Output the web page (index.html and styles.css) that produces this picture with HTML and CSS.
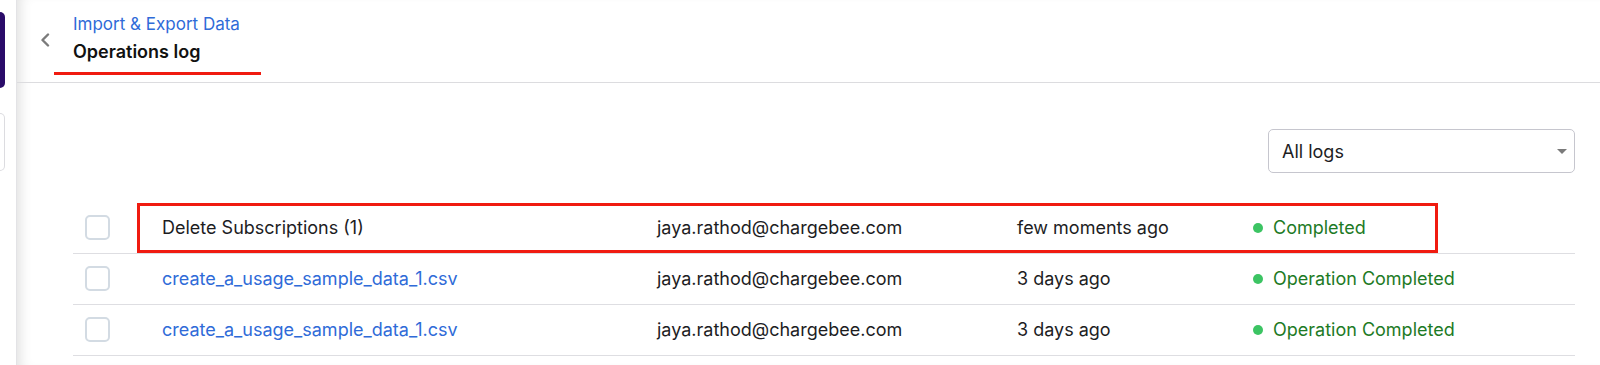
FILE: index.html
```html
<!DOCTYPE html>
<html lang="en">
<head>
    <meta charset="UTF-8">
    <meta name="viewport" content="width=device-width, initial-scale=1.0">
    <title>Operations log</title>
    <link rel="stylesheet" href="styles.css">
</head>
<body>
    <div class="app">
        <aside class="sidebar">
            <div class="brand"></div>
            <div class="side-box"></div>
        </aside>

        <main class="main">
            <header class="page-header">
                <svg class="back" width="10" height="14" viewBox="0 0 10 14">
                    <polyline points="8,1.5 2.5,7 8,12.5" fill="none" stroke="#7b7b7b" stroke-width="2.4" stroke-linecap="round" stroke-linejoin="round"/>
                </svg>
                <div class="title-block">
                    <a class="crumb" href="#">Import &amp; Export Data</a>
                    <h1 class="title">Operations log</h1>
                </div>
            </header>

            <div class="content">
                <div class="toolbar">
                    <div class="select">
                        <span>All logs</span>
                        <span class="caret"></span>
                    </div>
                </div>

                <div class="log-table">
                    <div class="row">
                        <div class="cell"><span class="checkbox"></span></div>
                        <div class="cell">Delete Subscriptions (1)</div>
                        <div class="cell">jaya.rathod@chargebee.com</div>
                        <div class="cell">few moments ago</div>
                        <div class="cell status"><span class="dot"></span>Completed</div>
                        <div class="highlight"></div>
                    </div>
                    <div class="row">
                        <div class="cell"><span class="checkbox"></span></div>
                        <div class="cell"><a class="file" href="#">create_a_usage_sample_data_1.csv</a></div>
                        <div class="cell">jaya.rathod@chargebee.com</div>
                        <div class="cell">3 days ago</div>
                        <div class="cell status"><span class="dot"></span>Operation Completed</div>
                    </div>
                    <div class="row">
                        <div class="cell"><span class="checkbox"></span></div>
                        <div class="cell"><a class="file" href="#">create_a_usage_sample_data_1.csv</a></div>
                        <div class="cell">jaya.rathod@chargebee.com</div>
                        <div class="cell">3 days ago</div>
                        <div class="cell status"><span class="dot"></span>Operation Completed</div>
                    </div>
                </div>
            </div>
        </main>
    </div>
</body>
</html>
```

FILE: styles.css
```css
body {
    margin: 0;
    font-family: 'Inter', 'Liberation Sans', sans-serif;
    color: #1d1d1f;
    background: #fff;
}

.app {
    display: flex;
    min-height: 365px;
}

.sidebar {
    width: 16px;
    border-right: 1px solid #e3e3e6;
    flex-shrink: 0;
}

.brand {
    width: 5px;
    height: 76px;
    margin-top: 12px;
    background: #2a0b69;
    border-radius: 0 7px 7px 0;
}

.side-box {
    width: 4px;
    height: 56px;
    margin-top: 25px;
    border: 1px solid #dcdce0;
    border-left: none;
    border-radius: 0 5px 5px 0;
}

.main {
    flex: 1;
    box-shadow: inset 12px 0 14px -10px rgba(0, 0, 0, 0.14);
}

.page-header {
    display: flex;
    align-items: flex-start;
    height: 82px;
    border-bottom: 1px solid #dcdcdf;
    box-sizing: content-box;
}

.back {
    margin: 33px 0 0 23px;
}

.title-block {
    margin-left: 4px;
    padding: 12px 21px 8px 19px;
    border-bottom: 3px solid #f01b10;
}

.crumb {
    display: block;
    font-size: 17px;
    line-height: 24px;
    color: #2f6bd8;
    text-decoration: none;
}

.title {
    margin: 4px 0 0;
    font-size: 18px;
    line-height: 24px;
    font-weight: 600;
    color: #111;
}

.content {
    padding: 46px 25px 0 56px;
}

.toolbar {
    display: flex;
    justify-content: flex-end;
}

.select {
    width: 307px;
    height: 44px;
    box-sizing: border-box;
    display: flex;
    align-items: center;
    justify-content: space-between;
    padding: 0 7px 0 13px;
    border: 1px solid #c6c6ce;
    border-radius: 5px;
    font-size: 18px;
}

.caret {
    width: 0;
    height: 0;
    border-left: 5px solid transparent;
    border-right: 5px solid transparent;
    border-top: 5px solid #7a7a7a;
    margin-top: 1px;
}

.log-table {
    margin-top: 30px;
}

.row {
    position: relative;
    display: grid;
    grid-template-columns: 89px 495px 360px 236px 1fr;
    align-items: center;
    height: 51px;
    box-sizing: border-box;
    border-bottom: 1px solid #dedee2;
    font-size: 18px;
}

.cell {
    display: flex;
    align-items: center;
    padding-bottom: 1px;
}

.checkbox {
    width: 25px;
    height: 25px;
    margin-left: 12px;
    box-sizing: border-box;
    border: 2px solid #d3dbe3;
    border-radius: 5px;
}

.file {
    color: #2f6bd8;
    text-decoration: none;
}

.status {
    color: #1d7a25;
}

.dot {
    width: 10px;
    height: 10px;
    border-radius: 50%;
    background: #3cc463;
    margin-right: 10px;
}

.highlight {
    position: absolute;
    left: 64px;
    top: 0;
    width: 1301px;
    height: 50px;
    box-sizing: border-box;
    border: 3px solid #f01b10;
}
```
